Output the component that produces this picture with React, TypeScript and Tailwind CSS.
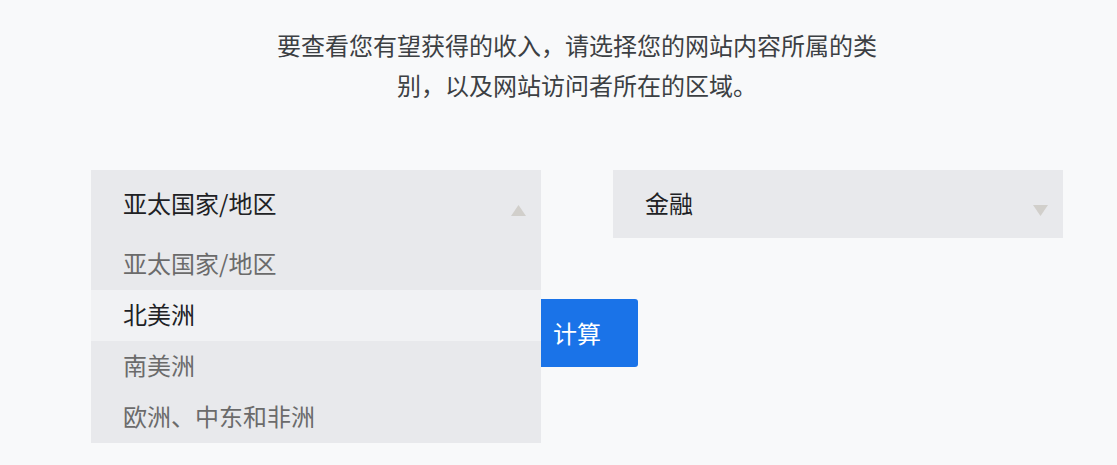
import { useState } from 'react';

const regions = ['亚太国家/地区', '北美洲', '南美洲', '欧洲、中东和非洲'];

function Caret({ up }: { up?: boolean }) {
  return (
    <svg width="15" height="11" viewBox="0 0 15 11" className="shrink-0">
      <polygon points={up ? '7.5,0 15,11 0,11' : '0,0 15,0 7.5,11'} fill="#d1cfcb" />
    </svg>
  );
}

export default function App() {
  const [region] = useState(regions[0]);
  const [hovered] = useState(1);

  return (
    <div
      className="min-h-[465px] w-full bg-[#f8f9fa] overflow-hidden"
      style={{ fontFamily: '"Noto Sans CJK SC", "Noto Sans", sans-serif' }}
    >
      <div className="ml-[91px] w-[972px]">
        {/* Intro */}
        <p className="mx-auto w-[612px] pt-[25px] text-center text-[24px] leading-[40px] text-[#3c4043]">
          要查看您有望获得的收入，请选择您的网站内容所属的类别，以及网站访问者所在的区域。
        </p>

        {/* Selects */}
        <div className="mt-[65px] flex gap-[72px]">
          <div className="relative w-[450px]">
            <div className="flex h-[68px] items-center justify-between bg-[#e8e9ec] pl-[32px] pr-[15px]">
              <span className="mb-[3px] text-[24px] text-[#202124]">{region}</span>
              <span className="mt-[12px]">
                <Caret up />
              </span>
            </div>
            {/* Open menu */}
            <div className="absolute left-0 top-full z-10 w-full bg-[#e8e9ec]">
              {regions.map((r, i) => (
                <div
                  key={r}
                  className={`flex items-center pb-[3px] pl-[32px] text-[24px] ${i === 0 ? 'h-[52px]' : 'h-[51px]'} ${
                    i === hovered ? 'bg-[#f1f2f4] text-[#202124]' : 'text-[#6b6b6b]'
                  }`}
                >
                  {r}
                </div>
              ))}
            </div>
          </div>

          <div className="flex h-[68px] w-[450px] items-center justify-between bg-[#e8e9ec] pl-[32px] pr-[15px]">
            <span className="mb-[3px] text-[24px] text-[#202124]">金融</span>
            <span className="mt-[12px]">
              <Caret />
            </span>
          </div>
        </div>

        {/* Button */}
        <div className="mt-[61px] flex justify-center">
          <button className="flex h-[68px] w-[122px] items-center justify-center rounded-[3px] bg-[#1a73e8] text-[24px] text-white">
            计算
          </button>
        </div>
      </div>
    </div>
  );
}
